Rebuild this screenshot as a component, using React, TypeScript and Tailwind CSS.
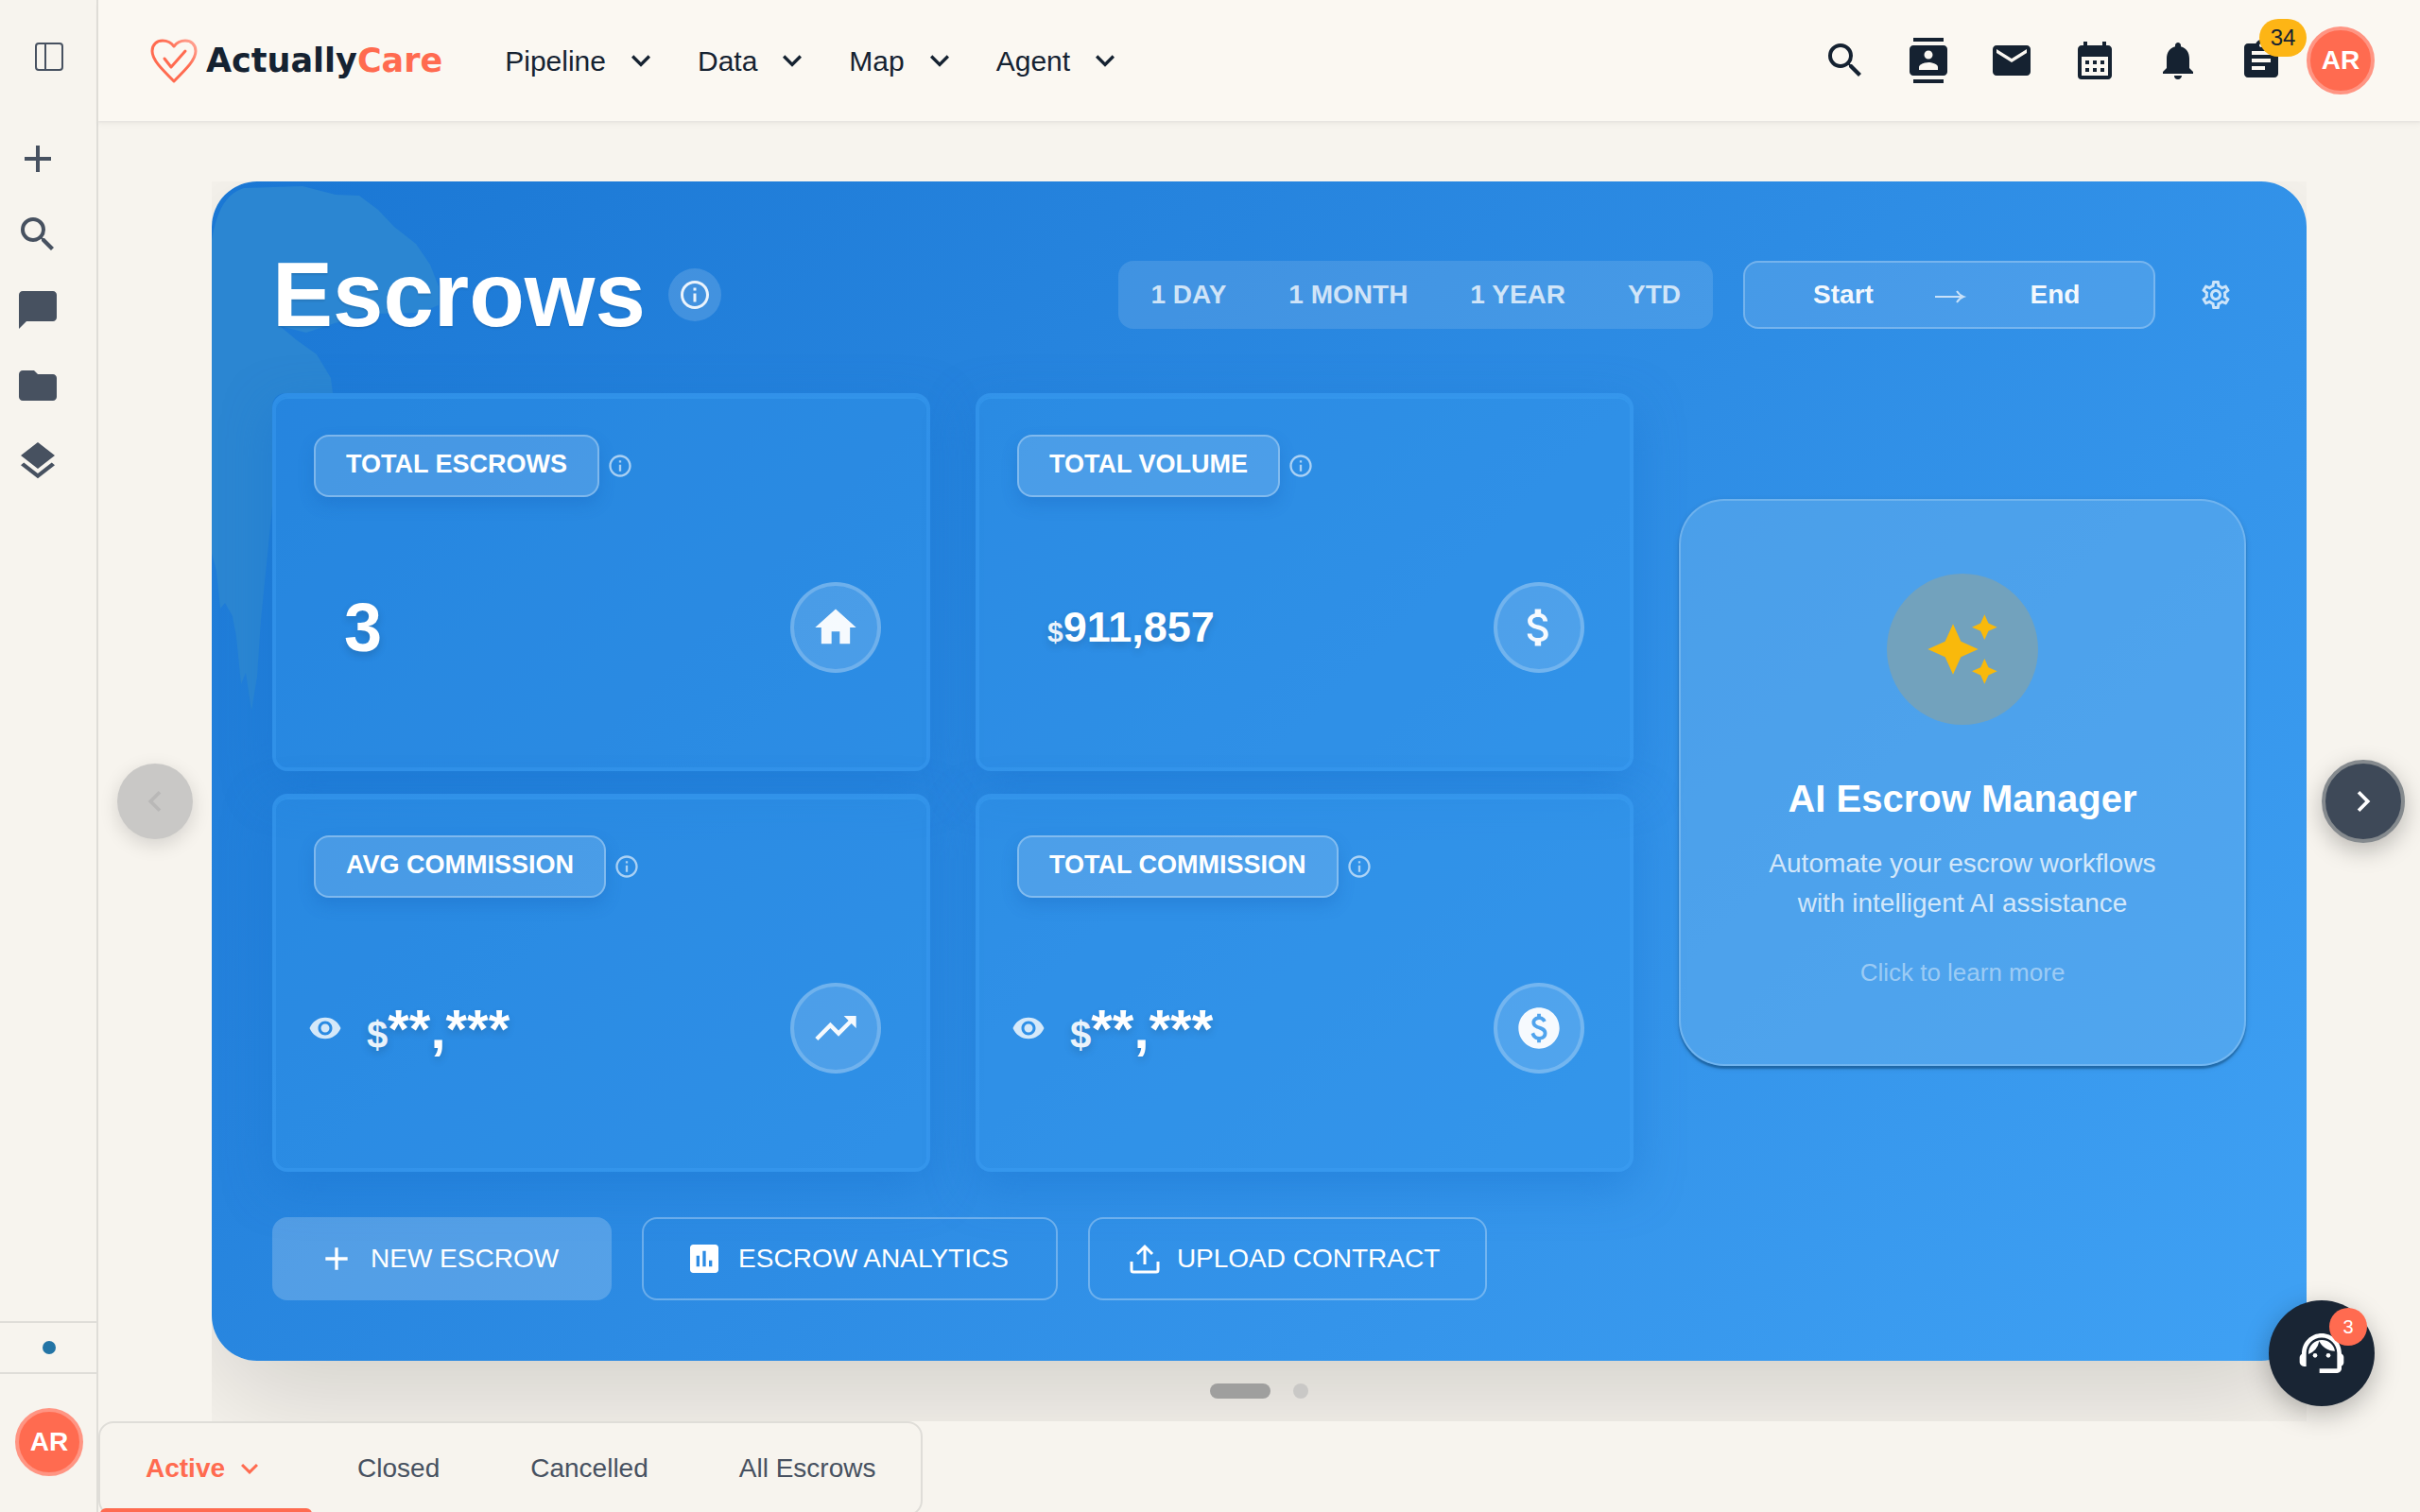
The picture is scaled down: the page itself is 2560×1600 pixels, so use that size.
import type { ReactNode } from 'react'
import type { IconType } from 'react-icons'
import {
  MdAdd,
  MdAssessment,
  MdAssignment,
  MdAttachMoney,
  MdAutoAwesome,
  MdCalendarMonth,
  MdChatBubble,
  MdChevronLeft,
  MdChevronRight,
  MdContacts,
  MdEmail,
  MdFolder,
  MdHome,
  MdInfoOutline,
  MdKeyboardArrowDown,
  MdLayers,
  MdNotifications,
  MdOutlineSettings,
  MdPaid,
  MdSearch,
  MdSupportAgent,
  MdTrendingUp,
  MdVisibility,
} from 'react-icons/md'

const sidebarItems: { label: string; icon: IconType }[] = [
  { label: 'New', icon: MdAdd },
  { label: 'Search', icon: MdSearch },
  { label: 'Chats', icon: MdChatBubble },
  { label: 'Projects', icon: MdFolder },
  { label: 'Artifacts', icon: MdLayers },
]

const navItems = ['Pipeline', 'Data', 'Map', 'Agent']

const headerItems: { label: string; icon: IconType; count?: number }[] = [
  { label: 'Search', icon: MdSearch },
  { label: 'Contacts', icon: MdContacts },
  { label: 'Email', icon: MdEmail },
  { label: 'Calendar', icon: MdCalendarMonth },
  { label: 'Notifications', icon: MdNotifications },
  { label: 'Tasks', icon: MdAssignment, count: 34 },
]

const periods = ['1 DAY', '1 MONTH', '1 YEAR', 'YTD']

const statusTabs = ['Closed', 'Cancelled', 'All Escrows']

function Avatar() {
  return (
    <button
      type="button"
      aria-label="Account"
      className="flex size-18 shrink-0 items-center justify-center rounded-full border-4 border-[#ff9583] bg-[#ff6b50] text-[28px] font-bold text-white"
    >
      AR
    </button>
  )
}

function Sidebar() {
  return (
    <aside className="flex w-26 shrink-0 flex-col text-[#475160] shadow-[inset_-2px_0_#dfddd8]">
      <div className="flex h-30 items-center justify-center">
        <button type="button" aria-label="Toggle sidebar">
          <svg className="size-8" viewBox="0 0 32 32" fill="none" stroke="currentColor" strokeWidth="2">
            <rect x="2" y="2" width="28" height="28" rx="3" />
            <path d="M12 2v28" />
          </svg>
        </button>
      </div>
      <nav className="flex flex-col items-start pt-2">
        {sidebarItems.map(({ label, icon: Icon }) => (
          <button key={label} type="button" aria-label={label} className="p-4">
            <Icon className="size-12" />
          </button>
        ))}
      </nav>
      <div className="mt-auto flex h-[54px] items-center justify-center border-t-2 border-[#dfddd8]">
        <span className="size-[14px] rounded-full bg-[#2374a5]" />
      </div>
      <div className="flex justify-center border-t-2 border-[#dfddd8] pt-9 pb-[38px]">
        <Avatar />
      </div>
    </aside>
  )
}

function Logo() {
  return (
    <a href="#" className="flex items-center gap-2">
      <svg className="h-12 w-13" viewBox="0 0 52 48" fill="none" strokeLinecap="round" strokeLinejoin="round">
        <defs>
          <linearGradient id="heart" x1="0" y1="1" x2="1" y2="0">
            <stop offset="0.6" stopColor="#ff6b50" />
            <stop offset="1" stopColor="#ffa798" />
          </linearGradient>
        </defs>
        <path
          d="M26 46C12 32 3 23 3 14 3 7 8 3 14 3c5 0 9 2 12 6 3-4 7-6 12-6 6 0 11 4 11 11 0 9-9 18-23 32z"
          stroke="url(#heart)"
          strokeWidth="3"
        />
        <path d="M16 22l7 9 15-17" stroke="#ff6b50" strokeWidth="3" />
      </svg>
      <span className="font-['DejaVu_Sans',sans-serif] text-[35px] font-bold text-[#152231]">
        Actually<span className="text-[#ff6b50]">Care</span>
      </span>
    </a>
  )
}

function Header() {
  return (
    <header className="relative flex h-32 items-center bg-[#fbf8f2] pr-12 pl-[54px] text-[#152231] shadow-[0_2px_2px_#e8e5e0,0_4px_6px_rgba(0,0,0,0.03)]">
      <Logo />
      <nav className="ml-[66px] flex gap-10">
        {navItems.map((item) => (
          <button key={item} type="button" className="flex items-center gap-[17px] text-[30px]">
            {item}
            <MdKeyboardArrowDown className="size-10" />
          </button>
        ))}
      </nav>
      <div className="ml-auto flex items-center gap-1">
        <div className="flex">
          {headerItems.map(({ label, icon: Icon, count }) => (
            <button key={label} type="button" aria-label={label} className="relative p-5">
              <Icon className="size-12" />
              {count && (
                <span className="absolute top-0 -right-1 flex h-10 w-[50px] items-center justify-center rounded-full bg-[#fdb515] text-2xl">
                  {count}
                </span>
              )}
            </button>
          ))}
        </div>
        <Avatar />
      </div>
    </header>
  )
}

type StatCardProps = {
  label: string
  icon: IconType
  hidden?: boolean
  children: ReactNode
}

function StatCard({ label, icon: Icon, hidden, children }: StatCardProps) {
  return (
    <section className="min-h-[400px] rounded-2xl border-4 border-[#3a9df2]/60 bg-[#3296ea]/40 bg-clip-padding p-10 shadow-[0_16px_48px_rgba(25,118,210,0.5),inset_0_2px_0_rgba(66,165,245,0.35)]">
      <div className="flex items-center gap-2">
        <h2 className="flex h-[66px] items-center rounded-2xl border-2 border-white/30 bg-white/15 px-8 pb-1 text-[27px] font-bold shadow-[0_8px_16px_rgba(20,90,180,0.25)]">
          {label}
        </h2>
        <button type="button" aria-label={`About ${label.toLowerCase()}`} className="text-white/60">
          <MdInfoOutline className="size-7" />
        </button>
      </div>
      <div className="mt-[90px] flex h-24 items-center pr-2">
        {hidden && (
          <button type="button" aria-label="Show amount" className="-ml-2 mr-6 flex w-10 justify-center text-white/80">
            <MdVisibility className="size-9" />
          </button>
        )}
        {children}
        <span className="ml-auto flex size-24 items-center justify-center rounded-full border-4 border-white/20 bg-white/15 text-white/95">
          <Icon className="size-13" />
        </span>
      </div>
    </section>
  )
}

function HiddenAmount() {
  return (
    <p className="text-[58px] font-bold [text-shadow:0_4px_8px_rgba(0,0,0,0.15)]">
      <span className="text-[40px] text-white/90">$</span>**,***
    </p>
  )
}

function AiManagerCard() {
  return (
    <button
      type="button"
      className="flex aspect-square flex-col items-center justify-center rounded-[48px] border-2 border-white/20 bg-[#66b0ee]/50 shadow-[0_3px_2px_rgba(0,50,90,0.4),0_2px_6px_rgba(0,0,0,0.12)]"
    >
      <span className="flex size-40 items-center justify-center rounded-full bg-[#72a2bd] text-[#f9b90b]">
        <MdAutoAwesome className="size-20" />
      </span>
      <span className="mt-12 text-[40px] leading-[60px] font-bold">AI Escrow Manager</span>
      <span className="mt-[18px] max-w-[440px] text-[28px] leading-[42px] text-white/75">
        Automate your escrow workflows with intelligent AI assistance
      </span>
      <span className="mt-8 text-[26px] leading-10 text-white/45">Click to learn more</span>
    </button>
  )
}

function HeroHeader() {
  return (
    <div className="flex items-center">
      <h1 className="text-[96px] leading-[112px] font-bold [text-shadow:0_2px_2px_rgba(0,0,0,0.1)]">Escrows</h1>
      <button
        type="button"
        aria-label="About escrows"
        className="ml-6 flex size-14 items-center justify-center rounded-full bg-white/15 text-white/90"
      >
        <MdInfoOutline className="size-9" />
      </button>
      <div className="ml-auto flex h-18 items-center gap-[2px] rounded-2xl bg-white/12 px-[2px]">
        {periods.map((period) => (
          <button key={period} type="button" className="px-8 text-[28px] font-bold text-white/75">
            {period}
          </button>
        ))}
      </div>
      <div className="ml-8 flex h-18 items-center rounded-2xl border-2 border-white/25 bg-white/12 px-6 text-[28px] font-bold text-white/95">
        <button type="button" className="w-40">
          Start
        </button>
        <svg className="w-16" viewBox="0 0 64 24" fill="none" stroke="white" strokeOpacity="0.7" strokeWidth="2">
          <path d="M17 14h29M40 8c2 3 4 5 7 6-3 1-5 3-7 6" />
        </svg>
        <button type="button" className="w-40">
          End
        </button>
      </div>
      <button type="button" aria-label="Settings" className="ml-8 flex w-16 justify-center text-white/75">
        <MdOutlineSettings className="size-9" />
      </button>
    </div>
  )
}

function EscrowsHero() {
  return (
    <section className="relative overflow-hidden rounded-[48px] bg-linear-135 from-[#1a77d4] to-[#3fa1f4] p-16 text-white">
      {/* Paint wash in the top left corner */}
      <svg className="absolute top-0 left-0 h-[600px] w-[260px]" viewBox="0 0 260 600" fill="#2b86d2">
        <path d="M0 62C6 28 16 13 34 7L96 5l35 9 25 1 20 15 17 18 23 18 15 22 9 23v20l-20 8-50 1-40 10-30 10-28-7 18 15 21 15 15 25 2 16H80q-16 0-16 16v104l-6 60-6 60-4 60-6 36-6-40-5 12-5-50-4-22-8-14-5 6-4-40-5-18z" />
      </svg>
      <div className="relative">
        <HeroHeader />
        <div className="mt-12 grid grid-cols-[12fr_5fr] items-center gap-12">
          <div className="grid grid-cols-2 gap-x-12 gap-y-6">
            <StatCard label="TOTAL ESCROWS" icon={MdHome}>
              <p className="pl-8 text-[72px] font-bold [text-shadow:0_4px_8px_rgba(0,0,0,0.15)]">3</p>
            </StatCard>
            <StatCard label="TOTAL VOLUME" icon={MdAttachMoney}>
              <p className="pl-8 text-[45px] font-bold [text-shadow:0_4px_8px_rgba(0,0,0,0.15)]">
                <span className="text-[30px] text-white/90">$</span>911,857
              </p>
            </StatCard>
            <StatCard label="AVG COMMISSION" icon={MdTrendingUp} hidden>
              <HiddenAmount />
            </StatCard>
            <StatCard label="TOTAL COMMISSION" icon={MdPaid} hidden>
              <HiddenAmount />
            </StatCard>
          </div>
          <AiManagerCard />
        </div>
        <div className="mt-12 flex gap-8 text-[28px]">
          <button
            type="button"
            className="flex h-22 items-center gap-4 rounded-2xl bg-white/20 pr-14 pl-12"
          >
            <MdAdd className="size-10" />
            NEW ESCROW
          </button>
          <button
            type="button"
            className="flex h-22 items-center gap-4 rounded-2xl border-2 border-white/30 pr-[50px] pl-11"
          >
            <MdAssessment className="size-10" />
            ESCROW ANALYTICS
          </button>
          <button
            type="button"
            className="flex h-22 items-center gap-4 rounded-2xl border-2 border-white/30 pr-12 pl-10"
          >
            <svg className="size-9" viewBox="0 0 36 36" fill="none" stroke="currentColor" strokeWidth="3">
              <path d="M18 24V6M10 13l8-8 8 8M4 21v9q0 2 2 2h24q2 0 2-2v-9" />
            </svg>
            UPLOAD CONTRACT
          </button>
        </div>
      </div>
    </section>
  )
}

function Carousel() {
  return (
    <div className="flex items-center gap-4 px-4">
      <button
        type="button"
        disabled
        aria-label="Previous"
        className="m-1 flex size-20 shrink-0 items-center justify-center rounded-full bg-[#c9c8c6] text-[#b9b8b7] shadow-[0_6px_20px_rgba(0,0,0,0.14)]"
      >
        <MdChevronLeft className="size-11" />
      </button>
      <div className="min-w-0 flex-1 overflow-hidden">
        <div className="rounded-[48px] shadow-[0_40px_120px_rgba(0,0,0,0.15)]">
          <EscrowsHero />
        </div>
        <div className="relative flex justify-center gap-6 py-6">
          <button type="button" aria-label="Slide 1" className="h-4 w-16 rounded-full bg-[#9f9f9e]" />
          <button type="button" aria-label="Slide 2" className="size-4 rounded-full bg-[#c9c8c6]" />
        </div>
      </div>
      <button
        type="button"
        aria-label="Next"
        className="flex size-22 shrink-0 items-center justify-center rounded-full border-4 border-[#858a8e] bg-[#3e4958] text-white shadow-[0_8px_24px_rgba(0,0,0,0.25)]"
      >
        <MdChevronRight className="size-11" />
      </button>
    </div>
  )
}

function StatusTabs() {
  return (
    <div className="flex w-fit rounded-2xl border-2 border-[#dfddd8] text-[28px] text-[#475160]">
      <button type="button" className="relative flex h-24 items-center gap-2 px-12 font-bold text-[#ff6b50]">
        Active
        <MdKeyboardArrowDown className="size-9" />
        <span className="absolute inset-x-0 bottom-0 h-[6px] rounded-t-md bg-[#ff6b50]" />
      </button>
      {statusTabs.map((tab) => (
        <button key={tab} type="button" className="h-24 px-12">
          {tab}
        </button>
      ))}
    </div>
  )
}

export default function App() {
  return (
    <div className="flex h-screen overflow-hidden bg-[#f7f4ee] font-['Liberation_Sans',Arial,sans-serif]">
      <Sidebar />
      <div className="min-w-0 flex-1">
        <Header />
        <main className="pt-16">
          <Carousel />
          <StatusTabs />
        </main>
      </div>
      <button
        type="button"
        aria-label="Support"
        className="fixed right-12 bottom-28 flex size-28 items-center justify-center rounded-full bg-[#192534] text-white shadow-[0_8px_28px_rgba(0,0,0,0.28)]"
      >
        <MdSupportAgent className="size-14" />
        <span className="absolute top-2 right-2 flex size-10 items-center justify-center rounded-full bg-[#ff6b50] text-xl">
          3
        </span>
      </button>
    </div>
  )
}
